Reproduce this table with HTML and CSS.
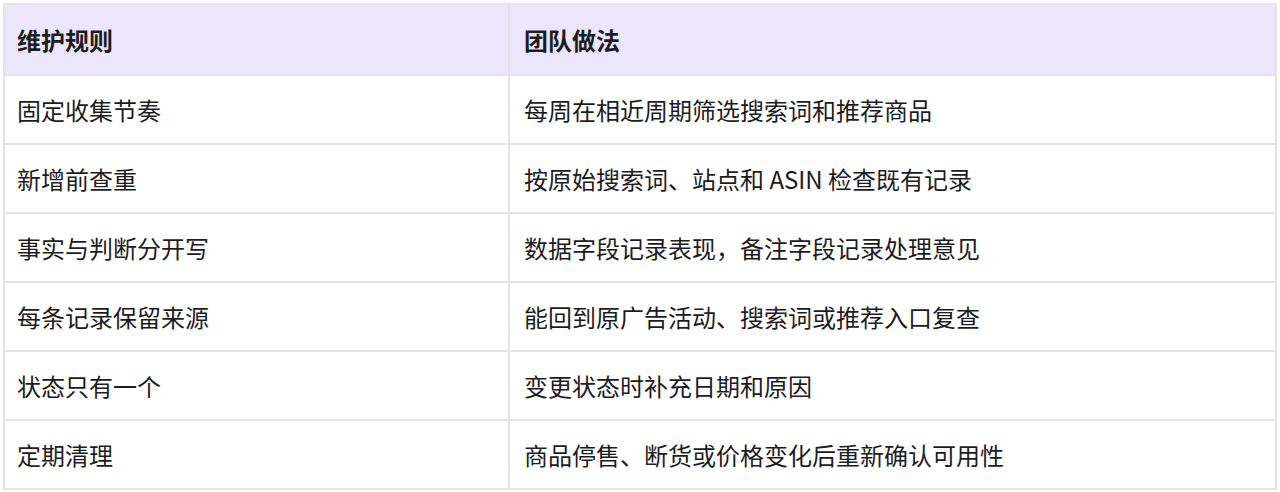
FILE: index.html
```html
<!DOCTYPE html>
<html lang="zh-CN">
<head>
<meta charset="utf-8">
<link rel="stylesheet" href="styles.css">
</head>
<body>
<div class="wrap">
<table class="rules">
<thead>
<tr><th class="c1">维护规则</th><th>团队做法</th></tr>
</thead>
<tbody>
<tr><td>固定收集节奏</td><td>每周在相近周期筛选搜索词和推荐商品</td></tr>
<tr><td>新增前查重</td><td>按原始搜索词、站点和 ASIN 检查既有记录</td></tr>
<tr><td>事实与判断分开写</td><td>数据字段记录表现，备注字段记录处理意见</td></tr>
<tr><td>每条记录保留来源</td><td>能回到原广告活动、搜索词或推荐入口复查</td></tr>
<tr><td>状态只有一个</td><td>变更状态时补充日期和原因</td></tr>
<tr><td>定期清理</td><td>商品停售、断货或价格变化后重新确认可用性</td></tr>
</tbody>
</table>
</div>
</body>
</html>
```
FILE: styles.css
```css
html, body {
  margin: 0;
  padding: 0;
  background: #ffffff;
}
.wrap {
  padding: 3px;
}
.rules {
  width: 1274px;
  border-collapse: collapse;
  table-layout: fixed;
  font-family: "Noto Sans CJK SC", "Noto Sans", sans-serif;
  font-size: 24px;
  color: #1c1c1e;
}
.rules th, .rules td {
  border: 2px solid #e3e3e8;
  text-align: left;
  vertical-align: middle;
  padding: 0 14px;
  line-height: 30px;
}
.rules th:first-child, .rules td:first-child {
  padding-left: 12px;
}
.rules th {
  background: #ece6fd;
  font-weight: 700;
  height: 69px;
}
.rules td {
  height: 67px;
}
.rules .c1 {
  width: 477px;
}
```
